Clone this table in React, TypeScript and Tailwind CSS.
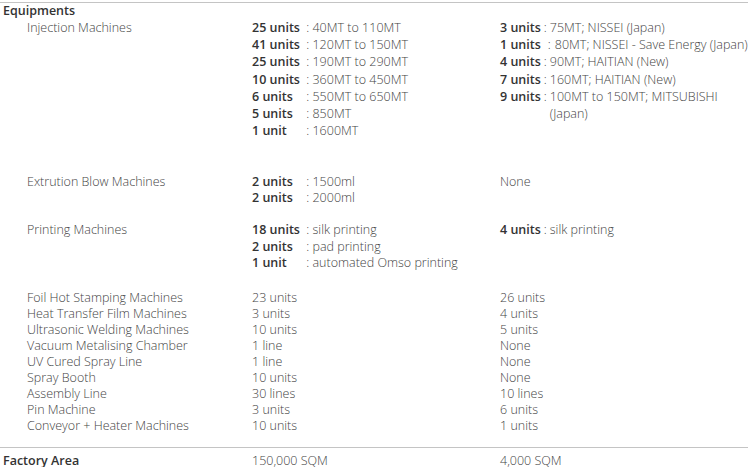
import React from 'react';

type Spec = { label: string; text: string; pad?: boolean };

const injectionLocal: Spec[] = [
  { label: '25 units', text: '40MT to 110MT' },
  { label: '41 units', text: '120MT to 150MT' },
  { label: '25 units', text: '190MT to 290MT' },
  { label: '10 units', text: '360MT to 450MT' },
  { label: '6 units', text: '550MT to 650MT' },
  { label: '5 units', text: '850MT' },
  { label: '1 unit', text: '1600MT' },
];

const injectionOther: Spec[] = [
  { label: '3 units', text: '75MT; NISSEI (Japan)' },
  { label: '1 units', text: '80MT; NISSEI - Save Energy (Japan)', pad: true },
  { label: '4 units', text: '90MT; HAITIAN (New)' },
  { label: '7 units', text: '160MT; HAITIAN (New)' },
  { label: '9 units', text: '100MT to 150MT; MITSUBISHI (Japan)' },
];

const simpleRows: [string, string, string][] = [
  ['Foil Hot Stamping Machines', '23 units', '26 units'],
  ['Heat Transfer Film Machines', '3 units', '4 units'],
  ['Ultrasonic Welding Machines', '10 units', '5 units'],
  ['Vacuum Metalising Chamber', '1 line', 'None'],
  ['UV Cured Spray Line', '1 line', 'None'],
  ['Spray Booth', '10 units', 'None'],
  ['Assembly Line', '30 lines', '10 lines'],
  ['Pin Machine', '3 units', '6 units'],
  ['Conveyor + Heater Machines', '10 units', '1 units'],
];

function AlignedSpec({ s }: { s: Spec }) {
  return (
    <div className="flex whitespace-nowrap">
      <span className="inline-block min-w-[51px] font-semibold text-[#333]">{s.label}</span>
      <span>&nbsp;: {s.text}</span>
    </div>
  );
}

function LooseSpec({ s }: { s: Spec }) {
  return (
    <div className="flex">
      <span className="whitespace-nowrap font-semibold text-[#333]">{s.label}</span>
      <span className={s.pad ? 'whitespace-nowrap pl-[7px] pr-[4px]' : 'whitespace-nowrap px-[3px]'}>:</span>
      <span className={s.pad ? 'flex-1 whitespace-nowrap' : 'flex-1'}>{s.text}</span>
    </div>
  );
}

export default function App() {
  return (
    <div
      className="w-[750px] h-[467px] overflow-hidden bg-white text-[12.5px] font-light text-[#444]"
      style={{ fontFamily: '"Open Sans", "Noto Sans", sans-serif' }}
    >
      <div className="mt-[2px] w-[748px] border-t border-[#c4c4c4]" />

      <div className="pl-[3px] leading-[16px] font-semibold text-[#333]">Equipments</div>

      <div className="flex leading-[17.2px]">
        <div className="w-[252px] pl-[27px]">Injection Machines</div>
        <div className="w-[248px]">
          {injectionLocal.map((s, i) => (
            <AlignedSpec key={i} s={s} />
          ))}
        </div>
        <div className="w-[248px]">
          {injectionOther.map((s, i) => (
            <LooseSpec key={i} s={s} />
          ))}
        </div>
      </div>

      <div className="mt-[34.5px] flex leading-[16px]">
        <div className="w-[252px] pl-[27px]">Extrution Blow Machines</div>
        <div className="w-[248px]">
          <AlignedSpec s={{ label: '2 units', text: '1500ml' }} />
          <AlignedSpec s={{ label: '2 units', text: '2000ml' }} />
        </div>
        <div className="w-[248px]">None</div>
      </div>

      <div className="mt-[16px] flex leading-[16.7px]">
        <div className="w-[252px] pl-[27px]">Printing Machines</div>
        <div className="w-[248px]">
          <AlignedSpec s={{ label: '18 units', text: 'silk printing' }} />
          <AlignedSpec s={{ label: '2 units', text: 'pad printing' }} />
          <AlignedSpec s={{ label: '1 unit', text: 'automated Omso printing' }} />
        </div>
        <div className="w-[248px]">
          <LooseSpec s={{ label: '4 units', text: 'silk printing' }} />
        </div>
      </div>

      <div className="mt-[18px] leading-[16px]">
        {simpleRows.map(([name, a, b]) => (
          <div key={name} className="flex">
            <div className="w-[252px] pl-[27px]">{name}</div>
            <div className="w-[248px]">{a}</div>
            <div className="w-[248px]">{b}</div>
          </div>
        ))}
      </div>

      <div className="mt-[13px] flex w-[748px] border-t border-[#c4c4c4] pt-[8px] leading-[10px]">
        <div className="w-[252px] pl-[3px] font-semibold text-[#333]">Factory Area</div>
        <div className="w-[248px]">150,000 SQM</div>
        <div className="w-[248px]">4,000 SQM</div>
      </div>
    </div>
  );
}
